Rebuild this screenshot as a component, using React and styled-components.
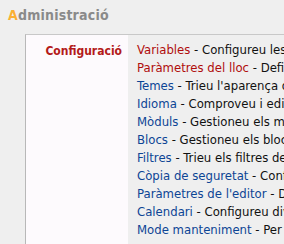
import React from 'react';
import styled, { createGlobalStyle } from 'styled-components';

const Global = createGlobalStyle`
  body {
    margin: 0;
    background: #efefef;
    font-family: 'DejaVu Sans Condensed', 'DejaVu Sans', sans-serif;
    font-size: 13px;
    overflow: hidden;
  }
`;

const Page = styled.div`
  width: 284px;
  height: 244px;
  overflow: hidden;
`;

const Heading = styled.h1`
  margin: 0;
  padding: 7px 0 0 8px;
  height: 34px;
  box-sizing: border-box;
  font-size: 14px;
  font-weight: bold;
  color: #8a8a8a;
  letter-spacing: 0.2px;
`;

const Initial = styled.span`
  color: #fbb034;
`;

const Section = styled.div`
  display: flex;
  margin-left: 25px;
  border-top: 1px solid #c8c8c8;
  border-left: 1px solid #b8b8b8;
  white-space: nowrap;
`;

const Label = styled.div`
  flex: 0 0 96px;
  padding: 9px 6px 0 0;
  background: #fdfafd;
  text-align: right;
  font-weight: bold;
  font-size: 12px;
  color: #b41a1a;
  height: 220px;
`;

const List = styled.ul`
  list-style: none;
  margin: 0;
  padding: 6px 0 0 9px;
`;

const Item = styled.li`
  line-height: 18px;
  color: #111;
`;

const Link = styled.a`
  color: ${p => (p.$visited ? '#b00d0d' : '#0d4595')};
  text-decoration: none;
`;

const items = [
  ['Variables', 'Configureu les variables del lloc', true],
  ['Paràmetres del lloc', 'Definiu els paràmetres del lloc', true],
  ['Temes', "Trieu l'aparença del lloc"],
  ['Idioma', "Comproveu i editeu l'idioma"],
  ['Mòduls', 'Gestioneu els mòduls instal·lats'],
  ['Blocs', 'Gestioneu els blocs'],
  ['Filtres', 'Trieu els filtres de text'],
  ['Còpia de seguretat', 'Configureu les còpies'],
  ["Paràmetres de l'editor", "Defineu l'editor"],
  ['Calendari', 'Configureu diversos aspectes'],
  ['Mode manteniment', 'Per mantenir el lloc'],
];

export default function App() {
  return (
    <Page>
      <Global />
      <Heading>
        <Initial>A</Initial>dministració
      </Heading>
      <Section>
        <Label>Configuració</Label>
        <List>
          {items.map(([name, desc, visited]) => (
            <Item key={name}>
              <Link href="#" $visited={visited}>{name}</Link> - {desc}
            </Item>
          ))}
        </List>
      </Section>
    </Page>
  );
}
